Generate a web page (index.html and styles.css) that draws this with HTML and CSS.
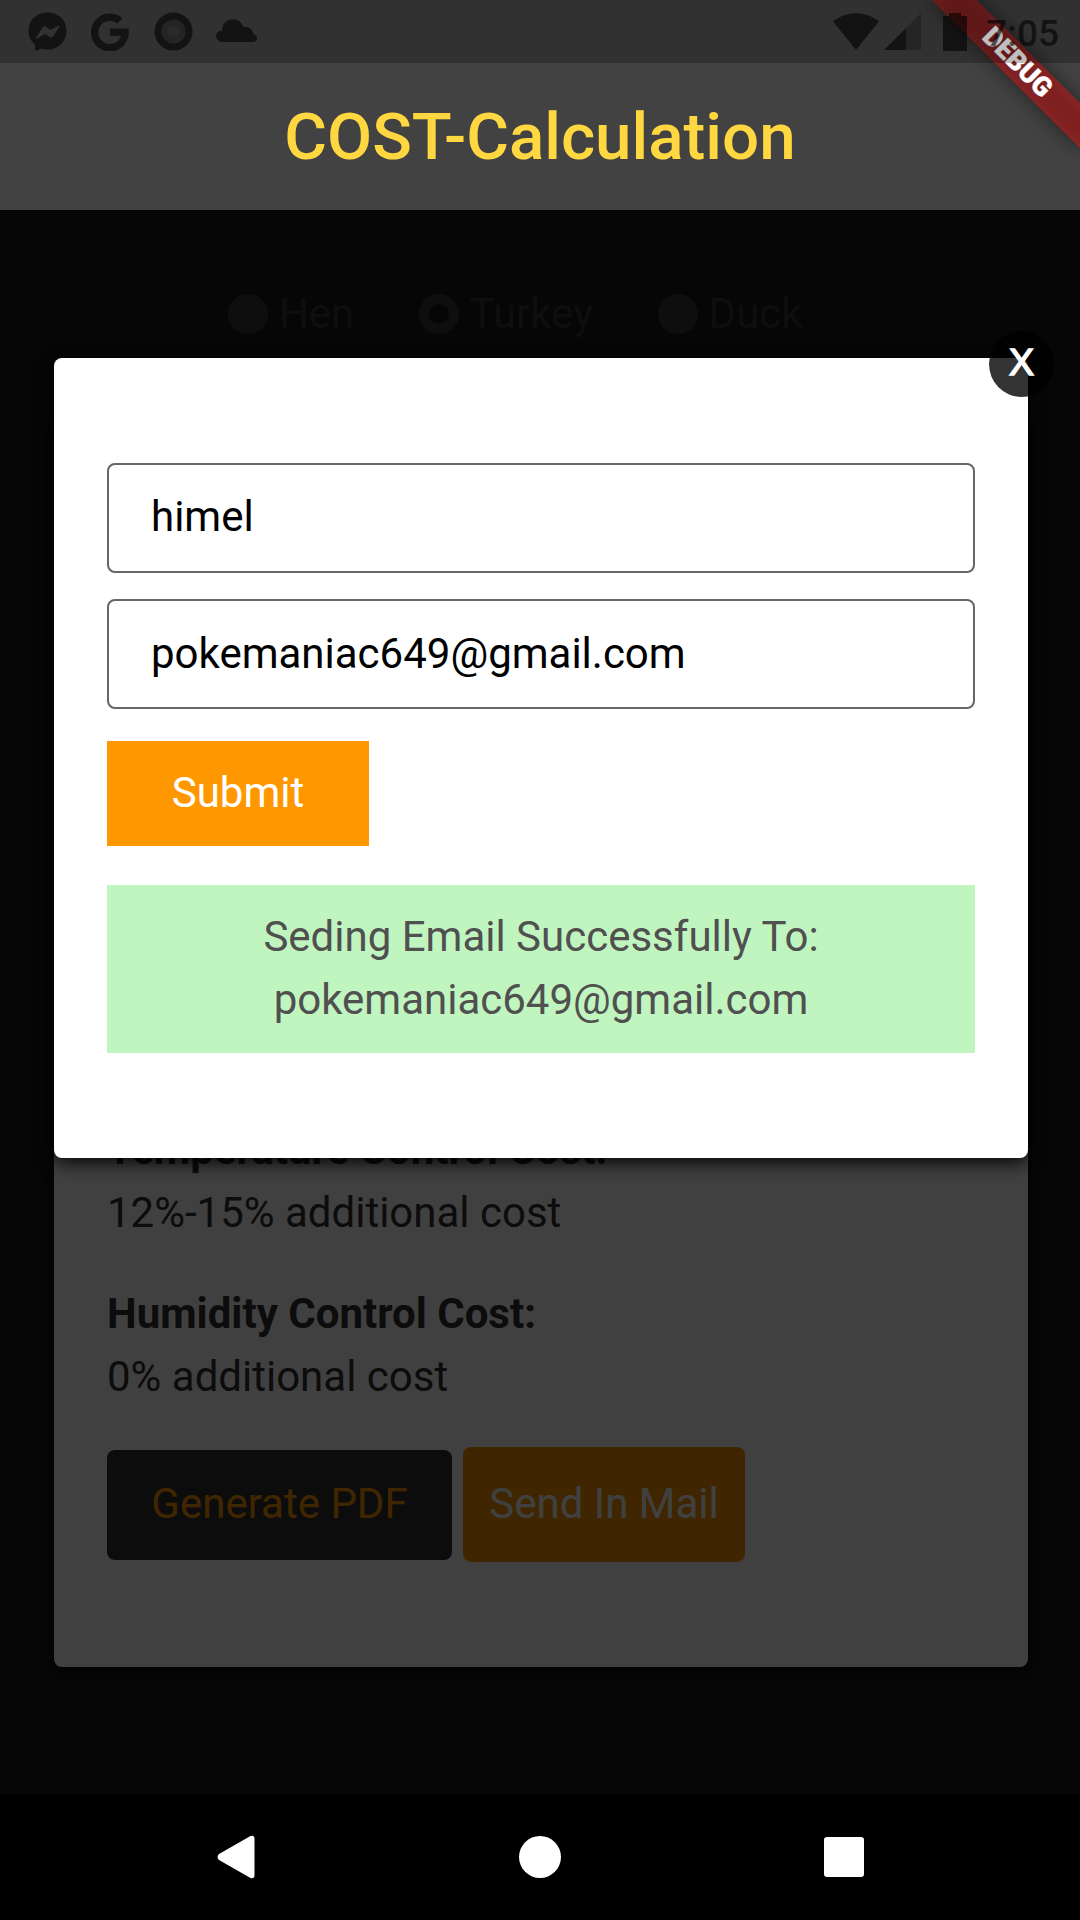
FILE: index.html
```html
<!DOCTYPE html>
<html lang="en">
<head>
<meta charset="utf-8">
<title>COST-Calculation</title>
<link rel="stylesheet" href="styles.css">
</head>
<body>
<div class="screen">
  <header class="appbar"><h1 class="title">COST-Calculation</h1></header>

  <main class="page">
    <div class="options">
      <span class="option"><i class="radio"></i>Hen</span>
      <span class="option"><i class="radio radio-on"></i>Turkey</span>
      <span class="option"><i class="radio"></i>Duck</span>
    </div>
    <section class="card">
      <p class="cost"><b>Temperature Control Cost:</b><br>12%-15% additional cost</p>
      <p class="cost"><b>Humidity Control Cost:</b><br>0% additional cost</p>
      <div class="actions">
        <button class="btn-pdf">Generate PDF</button>
        <button class="btn-mail">Send In Mail</button>
      </div>
    </section>

    <div class="overlay">
      <form class="modal">
        <input class="field" type="text" value="himel">
        <input class="field field-email" type="text" value="pokemaniac649@gmail.com">
        <button class="submit" type="button">Submit</button>
        <div class="notice">Seding Email Successfully To:<br>pokemaniac649@gmail.com</div>
        <button class="close" type="button">X</button>
      </form>
    </div>
  </main>

  <nav class="navbar">
    <svg class="nav-icon" viewBox="0 0 44 44"><path d="M36.500 1Q40.500 0 40.500 4V40Q40.500 44 36.500 43L5 25Q2 22 5 19Z"/></svg>
    <svg class="nav-icon" viewBox="0 0 44 44"><circle cx="22" cy="22" r="21"/></svg>
    <svg class="nav-icon" viewBox="0 0 44 44"><rect x="2" y="2" width="40" height="40" rx="3"/></svg>
  </nav>

  <div class="banner-clip">
    <div class="banner banner-shadow"></div>
    <div class="banner banner-label">DEBUG</div>
  </div>

  <div class="statusbar">
    <div class="status-left">
      <svg class="s-icon" viewBox="0 0 39 39"><path fill-rule="evenodd" d="M19.500.5C8.500.5.500 8 .500 18.500C.500 25 3 29 7 33V38Q7.500 39.200 9 38.500L13.500 36.500C15 37.300 17.500 37.500 19.500 37.500C30.500 37.500 38.500 29.500 38.500 19C38.500 8 30.500.5 19.500.5ZM8 25.800L14.500 15.500Q16.300 13.500 18.500 15L22.500 18L30 14Q32.200 13 31 15.200L25.500 24Q23.800 26.300 21.500 25L17.300 21.700L9.500 26.300Q7.300 27.200 8 25.800Z"/></svg>
      <svg class="s-icon g-icon" viewBox="0 0 38 38"><path d="M31.500 5.200A19 19 0 1 0 37.500 15.500H19V22.700H30A11.600 11.600 0 1 1 26.300 10.500Z"/></svg>
      <svg class="s-icon ring-icon" viewBox="0 0 39 39"><circle cx="19.500" cy="19.500" r="15.500" class="ring"/><circle cx="19.500" cy="19.500" r="12" opacity=".42"/><circle cx="19.500" cy="19.500" r="6" class="core"/></svg>
      <svg class="cloud" viewBox="0 0 41 23"><path d="M6 23A6 6 0 0 1 0 17A6 6 0 0 1 6 11.500C6 5 11 .3 17 .3C22 .3 26 3.500 27.300 8C32 7 37 10 37.300 15.200C39.500 15.600 41 17 41 19.200C41 21.500 39.200 23 37 23Z"/></svg>
    </div>
    <div class="status-right">
      <svg class="wifi" viewBox="0 0 46 37"><path d="M0 8.500C13-2.500 33-2.500 46 8.500L23 37Z"/></svg>
      <svg class="signal" viewBox="0 0 37 37"><path d="M37 0V37H22V15Z" opacity=".4"/><path d="M0 37L22 15V37Z"/></svg>
      <svg class="battery" viewBox="0 0 24 38"><path d="M6 0H18V3H24V38H0V3H6Z"/></svg>
      <span class="time">7:05</span>
    </div>
  </div>
</div>
</body>
</html>
```
FILE: styles.css
```css
* { box-sizing: border-box; }

body {
  margin: 0;
  background: #000;
  font: 42px/63px Roboto, sans-serif;
  color: #333;
}

button, input { font: inherit; border: 0; margin: 0; }

.screen {
  position: relative;
  display: flex;
  flex-direction: column;
  width: 1080px;
  height: 1920px;
  overflow: hidden;
}

.appbar {
  flex: none;
  height: 210px;
  padding-top: 63px;
  display: flex;
  align-items: center;
  justify-content: center;
  background: #424242;
}

.title {
  margin: 0;
  font-size: 65.5px;
  font-weight: 500;
  line-height: 76px;
  color: #ffd740;
}

.page {
  position: relative;
  flex: 1;
  display: flex;
  flex-direction: column;
  padding: 72px 52px 0 54px;
  background: #1a1a1a;
}

.options {
  display: flex;
  gap: 65px;
  padding-left: 174.4px;
  color: #383838;
}

.option { display: flex; align-items: center; gap: 10.5px; }

.radio {
  width: 40px;
  height: 40px;
  border-radius: 50%;
  background: #383838;
}

.radio-on { background: #1a1a1a; border: 10px solid #383838; }

.card {
  height: 1247px;
  margin-top: 75px;
  padding: 105px 53px;
  display: flex;
  flex-direction: column;
  justify-content: flex-end;
  background: #fff;
  border-radius: 8px;
  box-shadow: 0 5px 18px rgba(0, 0, 0, .75);
}

.cost { margin: 0 0 38px; }
.cost:nth-of-type(2) { margin-bottom: 39px; }

.actions { display: flex; align-items: center; gap: 11px; }

.btn-pdf {
  width: 345px;
  height: 110px;
  padding: 0 0 2px;
  border-radius: 8px;
  background: #333;
  color: #ff9800;
}

.btn-mail {
  width: 282px;
  height: 115px;
  padding: 0 0 2px;
  border-radius: 8px;
  background: #ff9800;
  color: #fff;
}

.overlay {
  position: absolute;
  inset: 0;
  padding: 148px 52px 0 54px;
  background: rgba(0, 0, 0, .75);
}

.modal {
  position: relative;
  display: flex;
  flex-direction: column;
  padding: 105px 53px;
  background: #fff;
  border-radius: 8px;
  box-shadow: 0 5px 18px rgba(0, 0, 0, .9);
}

.field {
  height: 110px;
  margin-bottom: 26px;
  padding: 0 42px 4px;
  border: 2px solid #666;
  border-radius: 8px;
  background: #fff;
  color: #000;
}

.field-email { padding-bottom: 2px; }

.submit {
  width: 262px;
  height: 105px;
  margin: 6px 0 39px;
  padding: 0 0 2px;
  background: #ff9800;
  color: #fff;
}

.notice {
  padding: 20px 0 22px;
  background: #c1f5c0;
  color: #505050;
  text-align: center;
}

.close {
  position: absolute;
  top: -27px;
  right: -26px;
  width: 65px;
  height: 66px;
  padding: 0 0 4px;
  border-radius: 50%;
  background: rgba(0, 0, 0, .8);
  color: #fff;
  font-family: "Liberation Sans", Arial, sans-serif;
  font-size: 37.5px;
  -webkit-text-stroke: 1.5px #fff;
  line-height: 62px;
}

.navbar {
  flex: none;
  height: 126px;
  padding: 0 214px;
  display: flex;
  align-items: center;
  justify-content: space-between;
  background: #000;
}

.nav-icon { width: 44px; height: 44px; fill: #fff; }

.banner-clip {
  position: absolute;
  top: 0;
  right: 0;
  width: 200px;
  height: 200px;
  overflow: hidden;
}

.banner {
  position: absolute;
  top: 73px;
  right: -105px;
  width: 210px;
  height: 31.5px;
  transform: rotate(45deg);
  transform-origin: 105px -73px;
}

.banner-shadow {
  background: rgba(0, 0, 0, .5);
  filter: blur(9.6px);
}

.banner-label {
  background: rgba(183, 28, 28, .627);
  color: #fff;
  font-size: 26.8px;
  font-weight: 900;
  -webkit-text-stroke: .4px #fff;
  line-height: 31.5px;
  text-align: center;
}

.statusbar {
  position: absolute;
  top: 0;
  left: 0;
  right: 0;
  height: 63px;
  display: flex;
  justify-content: space-between;
  padding: 0 21px 0 28px;
  background: rgba(0, 0, 0, .25);
  color: rgba(0, 0, 0, .6);
  fill: rgba(0, 0, 0, .6);
}

.status-left, .status-right { display: flex; align-items: center; }

.s-icon { width: 39px; height: 39px; }
.g-icon { width: 38px; height: 38px; margin-left: 24px; }
.ring-icon { margin-left: 25px; }
.ring { fill: none; stroke: rgba(0, 0, 0, .6); stroke-width: 7; }
.core { fill: rgba(70, 70, 70, .2); }
.cloud { width: 41px; height: 23px; margin: -3px 0 0 23px; }
.wifi { width: 46px; height: 37px; }
.signal { width: 37px; height: 37px; margin-left: 5px; }
.battery { width: 24px; height: 38px; margin-left: 22px; }
.time {
  margin-left: 19px;
  font-size: 37px;
  font-weight: 500;
  line-height: 63px;
  padding-top: 4px;
}
```
